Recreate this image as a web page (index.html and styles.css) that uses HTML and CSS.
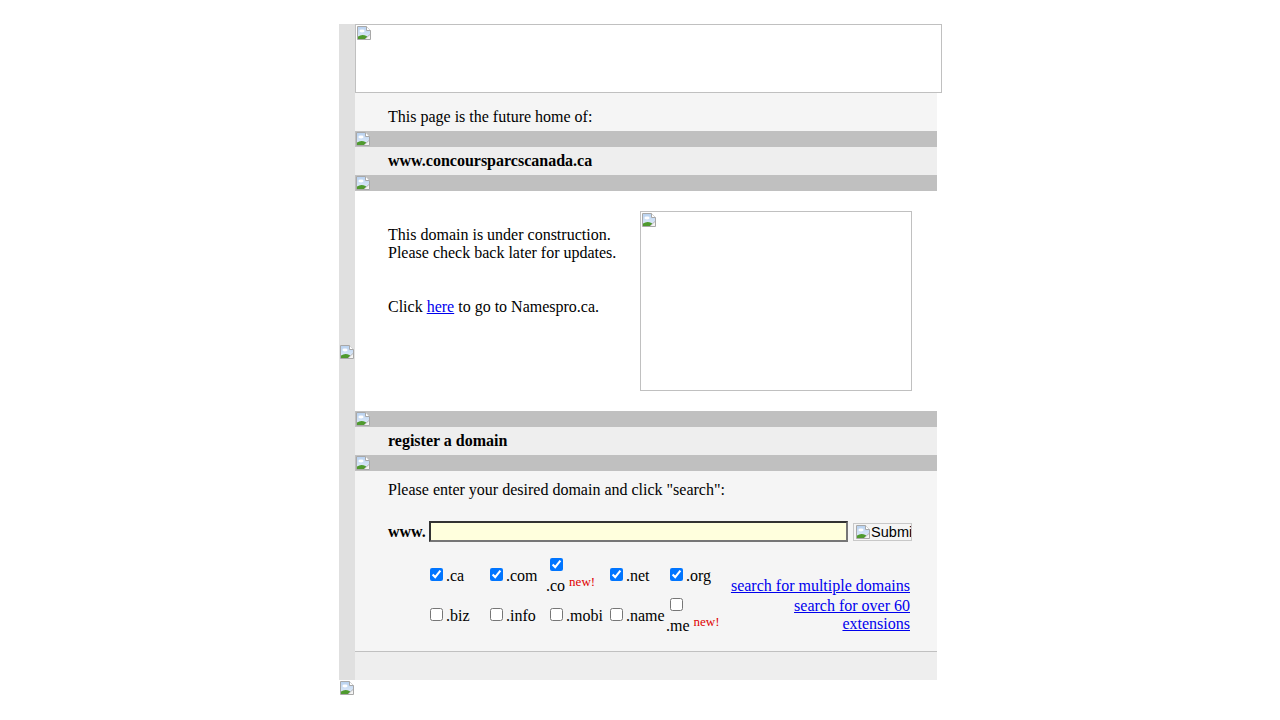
FILE: index.html
```html
<!DOCTYPE html>
<html>
<head>
<meta charset="utf-8">
<title>concoursparcscanada.ca</title>
<link rel="stylesheet" href="styles.css">
</head>
<body>
<svg class="defs" width="0" height="0" aria-hidden="true">
  <defs>
    <linearGradient id="sky" x1="0" y1="0" x2="0" y2="1">
      <stop offset="0" stop-color="#b9d2f0"/>
      <stop offset="1" stop-color="#e4eefa"/>
    </linearGradient>
    <symbol id="broken" viewBox="0 0 16 16">
      <path d="M1.5 1.5 H10.5 L14.5 5.5 V14.5 H1.5 Z" fill="#f4f4f4" stroke="#a8a8a8"/>
      <path d="M2 2 H10.3 L14 5.7 V14 H2 Z" fill="url(#sky)"/>
      <path d="M10.5 1.5 V5.5 H14.5" fill="#fff" stroke="#a8a8a8"/>
      <ellipse cx="6" cy="6" rx="2.6" ry="1.4" fill="#fff"/>
      <path d="M2 14 V11.5 Q6 8.6 10.5 11 L13 14 Z" fill="#4f9a2e"/>
      <path d="M9 14 L14 9.5 V14 Z" fill="#f4f4f4"/>
      <path d="M9 14 L14 9.5" stroke="#a8a8a8" stroke-width="0.8"/>
    </symbol>
  </defs>
</svg>

<div class="page">
  <div class="frame">
    <div class="strip">
      <svg class="bi" viewBox="0 0 16 16"><use href="#broken" width="16" height="16"/></svg>
    </div>
    <div class="main">
      <div class="banner"><svg class="bi" viewBox="0 0 16 16"><use href="#broken" width="16" height="16"/></svg></div>

      <div class="intro">This page is the future home of:</div>
      <div class="bar"><svg class="bi" viewBox="0 0 16 16"><use href="#broken" width="16" height="16"/></svg></div>
      <div class="title">www.concoursparcscanada.ca</div>
      <div class="bar"><svg class="bi" viewBox="0 0 16 16"><use href="#broken" width="16" height="16"/></svg></div>

      <div class="content">
        <div class="text">
          This domain is under construction.<br>
          Please check back later for updates.<br><br><br>
          Click <a href="#">here</a> to go to Namespro.ca.
        </div>
        <div class="pic"><svg class="bi" viewBox="0 0 16 16"><use href="#broken" width="16" height="16"/></svg></div>
      </div>

      <div class="bar"><svg class="bi" viewBox="0 0 16 16"><use href="#broken" width="16" height="16"/></svg></div>
      <div class="title">register a domain</div>
      <div class="bar"><svg class="bi" viewBox="0 0 16 16"><use href="#broken" width="16" height="16"/></svg></div>

      <div class="form">
        <p class="prompt">Please enter your desired domain and click "search":</p>
        <div class="search">
          <b class="www">www.</b>
          <input class="domain-input" type="text">
          <span class="submit"><svg class="bi" viewBox="0 0 16 16"><use href="#broken" width="16" height="16"/></svg>Submit</span>
        </div>
        <div class="tlds">
          <label class="tld"><input type="checkbox" checked>.ca</label>
          <label class="tld"><input type="checkbox" checked>.com</label>
          <label class="tld"><input type="checkbox" checked><br>.co <span class="new">new!</span></label>
          <label class="tld"><input type="checkbox" checked>.net</label>
          <label class="tld"><input type="checkbox" checked>.org</label>
          <div class="links links-top"><a href="#">search for multiple domains</a></div>

          <label class="tld"><input type="checkbox">.biz</label>
          <label class="tld"><input type="checkbox">.info</label>
          <label class="tld"><input type="checkbox">.mobi</label>
          <label class="tld"><input type="checkbox">.name</label>
          <label class="tld"><input type="checkbox"><br>.me <span class="new">new!</span></label>
          <div class="links links-bottom"><a href="#">search for over 60<br>extensions</a></div>
        </div>
      </div>

      <div class="footer"></div>
    </div>
  </div>
  <svg class="bi foot-icon" viewBox="0 0 16 16"><use href="#broken" width="16" height="16"/></svg>
</div>
</body>
</html>
```

FILE: styles.css
```css
html, body {
  margin: 0;
  padding: 0;
  background: #ffffff;
}

body {
  font-family: "Liberation Serif", "Times New Roman", serif;
  font-size: 16px;
  color: #000000;
}

.defs {
  position: absolute;
  width: 0;
  height: 0;
}

.bi {
  display: block;
  width: 16px;
  height: 16px;
  flex-shrink: 0;
}

a {
  color: #0000ee;
  text-decoration: underline;
}

.page {
  width: 598px;
  margin: 24px 0 0 339px;
  display: flex;
  flex-direction: column;
}

.frame {
  display: flex;
}

.strip {
  width: 16px;
  background: #e0e0e0;
  display: flex;
  align-items: center;
  flex-shrink: 0;
}

.main {
  width: 582px;
  display: flex;
  flex-direction: column;
}

.banner {
  width: 587px;
  height: 69px;
  box-sizing: border-box;
  border: 1px solid #c0c0c0;
  background: #ffffff;
  flex-shrink: 0;
}

.intro {
  background: #f5f5f5;
  height: 38px;
  box-sizing: border-box;
  padding: 15px 0 0 33px;
  line-height: 18px;
}

.bar {
  height: 16px;
  background: #c0c0c0;
}

.title {
  background: #eeeeee;
  height: 28px;
  box-sizing: border-box;
  padding: 5px 0 0 33px;
  line-height: 18px;
  font-weight: bold;
}

.content {
  background: #ffffff;
  display: flex;
  justify-content: space-between;
  padding: 20px 25px 20px 33px;
}

.text {
  margin-top: 15px;
  line-height: 18px;
}

.pic {
  width: 272px;
  height: 180px;
  box-sizing: border-box;
  border: 1px solid #c0c0c0;
}

.form {
  background: #f5f5f5;
  height: 180px;
  box-sizing: border-box;
  padding: 10px 25px 0 33px;
}

.prompt {
  margin: 0;
  line-height: 18px;
}

.search {
  display: flex;
  align-items: center;
  margin-top: 22px;
  height: 21px;
}

.www {
  line-height: 18px;
  margin-right: 3px;
}

.domain-input {
  width: 420px;
  height: 21px;
  box-sizing: border-box;
  margin: 0;
  padding: 1px 2px;
  background: #ffffdd;
  border-style: solid;
  border-width: 2px;
  border-color: #333333 #767676 #767676 #333333;
  font-family: "Liberation Sans", Arial, sans-serif;
  font-size: 13px;
}

.submit {
  margin-left: 5px;
  width: 59px;
  height: 18px;
  box-sizing: border-box;
  border: 1px solid #c8c8c8;
  padding-left: 1px;
  display: flex;
  align-items: center;
  overflow: hidden;
  white-space: nowrap;
  font-family: "Liberation Sans", Arial, sans-serif;
  font-size: 14.5px;
  color: #000;
}

.tlds {
  margin: 13px 0 0 38px;
  display: grid;
  grid-template-columns: 60px 60px 60px 60px 60px 1fr;
  grid-template-rows: 41px 40px;
}

.tld {
  align-self: center;
  line-height: 18px;
}

.tld input {
  margin: -2px 3px 2px 4px;
  width: 13px;
  height: 13px;
  vertical-align: 0;
}

.new {
  color: #e00000;
  font-size: 13px;
  vertical-align: 5px;
  line-height: 1;
}

.links {
  text-align: right;
  line-height: 18px;
  padding-right: 2px;
}

.links-top {
  align-self: end;
  padding-bottom: 1px;
}

.links-bottom {
  align-self: start;
  padding-top: 1px;
}

.footer {
  height: 29px;
  box-sizing: border-box;
  border-top: 1px solid #c0c0c0;
  background: #eeeeee;
}

.foot-icon {
  margin: 0;
}
```
